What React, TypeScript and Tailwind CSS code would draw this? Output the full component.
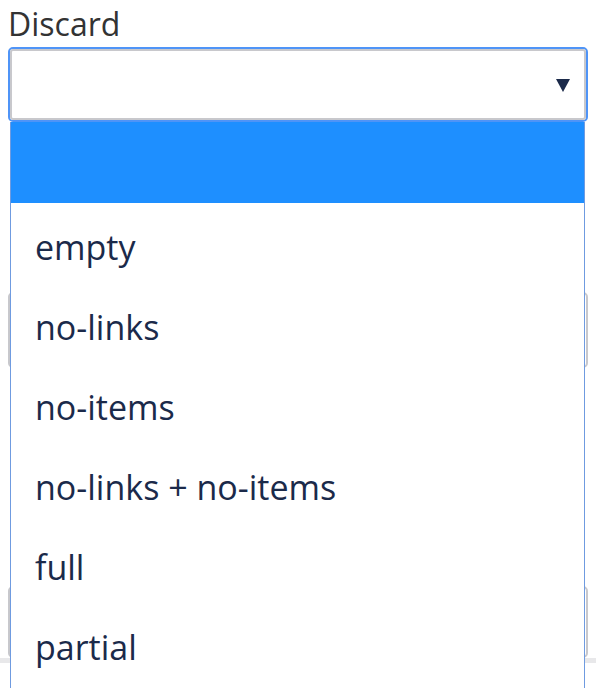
import React from "react";

const options = ["empty", "no-links", "no-items", "no-links + no-items", "full", "partial"];

export default function App() {
  return (
    <div
      className="relative w-[596px] h-[688px] overflow-hidden bg-white"
      style={{ fontFamily: '"Open Sans", "Noto Sans", sans-serif' }}
    >
      <div className="flex flex-col px-2">
        <div className="text-[32px] leading-[48px] text-[#333333] h-[47px]">Discard</div>
        <div className="h-[75px] rounded-[5px] border-2 border-[#4f94f7]">
          <div className="h-full rounded-[3px] border-2 border-[#c8c8cc] bg-white flex items-center justify-end pr-[14px]">
            <svg width="14" height="14" viewBox="0 0 14 14">
              <polygon points="0,1 14,1 7,14" fill="#1b2a4a" />
            </svg>
          </div>
        </div>
        <div className="h-[170px]" />
        <div className="h-[76px] rounded-[5px] border-2 border-[#c8c8cc]" />
        <div className="h-[218px]" />
        <div className="h-[72px] rounded-[5px] border-2 border-[#c8c8cc]" />
        <div className="-mx-2 h-[5px] bg-[#e8e8ea]" />
      </div>

      <div className="absolute left-[10px] top-[122px] w-[575px] h-[600px] bg-white border-x border-[#6f9be0]">
        <div className="h-[81px] bg-[#1e8fff]" />
        {options.map((o) => (
          <div
            key={o}
            className="h-[80px] flex items-center pl-[24px] pt-[8px] text-[34px] leading-[40px] text-[#1b2a4a]"
          >
            {o}
          </div>
        ))}
      </div>
    </div>
  );
}
